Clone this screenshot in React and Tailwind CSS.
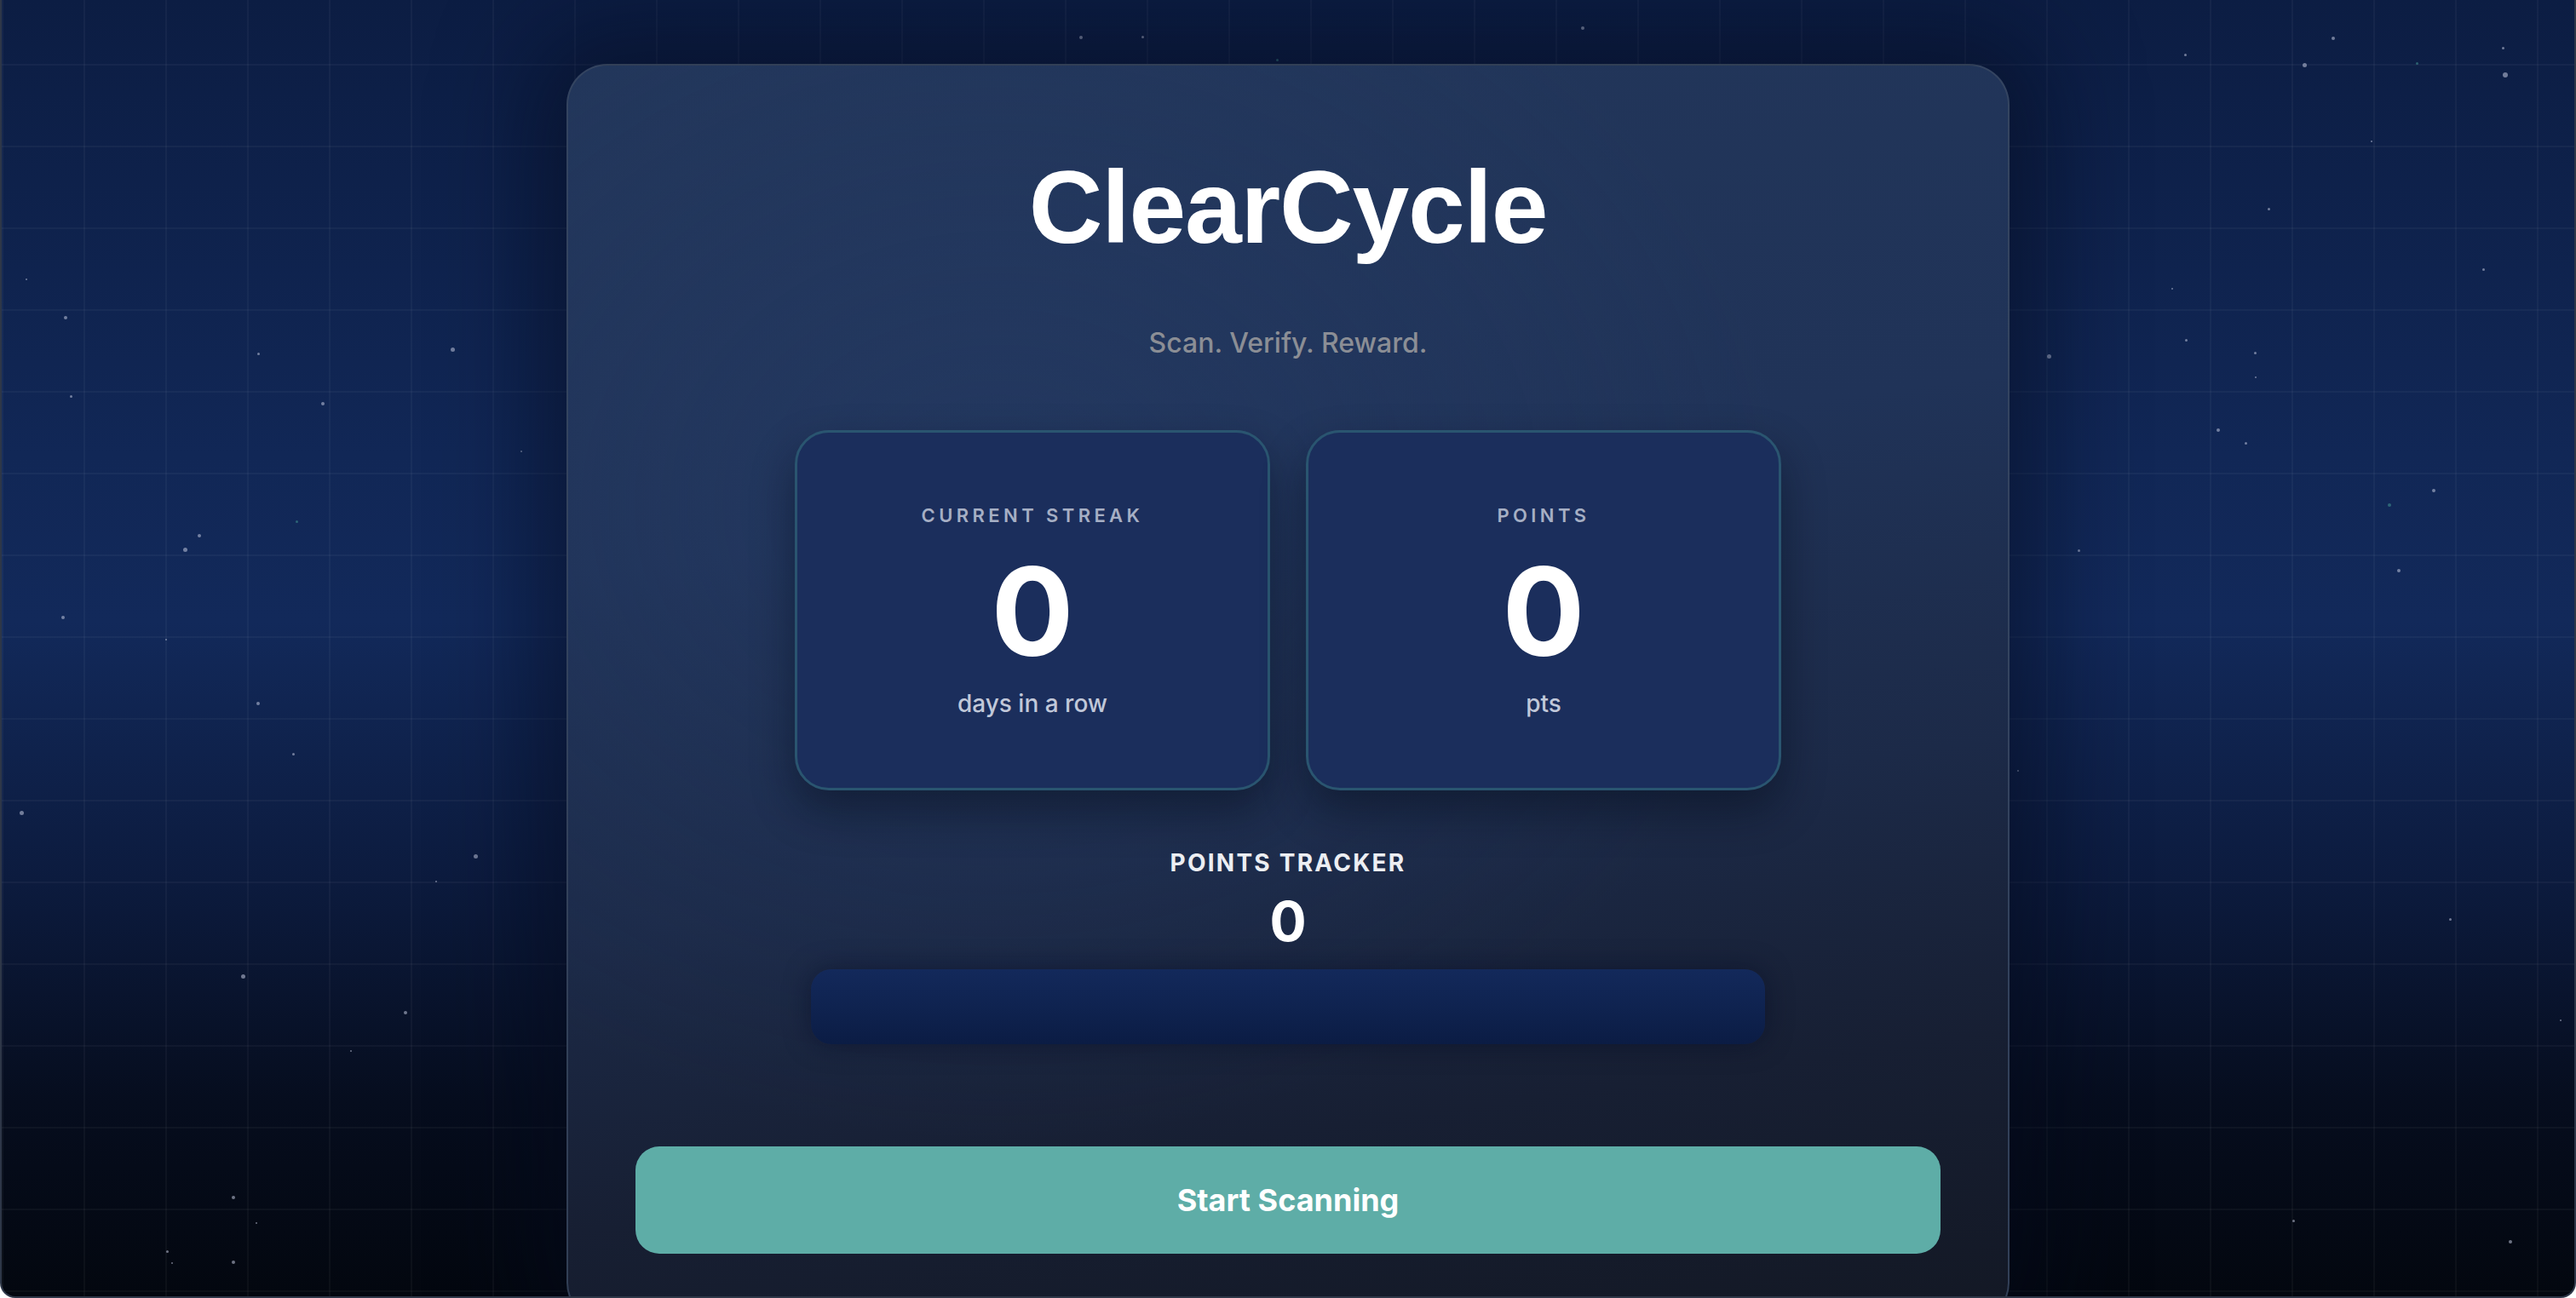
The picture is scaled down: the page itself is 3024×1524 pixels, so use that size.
import React from "react";

const stars = [
  [29, 328, 2], [75, 373, 4], [81, 465, 3], [301, 415, 3], [377, 474, 4],
  [529, 410, 5], [610, 530, 2], [346, 612, 3, true], [232, 629, 4], [215, 645, 5],
  [72, 725, 4], [193, 751, 2], [301, 826, 4], [342, 885, 3], [23, 954, 5],
  [556, 1005, 5], [510, 1035, 2], [283, 1146, 5], [474, 1189, 4], [410, 1234, 2],
  [272, 1406, 4], [299, 1436, 2], [194, 1469, 3], [200, 1483, 2], [272, 1482, 4],
  [1267, 44, 4], [1339, 43, 3], [1856, 33, 4], [1497, 70, 3, true],
  [2563, 64, 3], [2737, 45, 4], [2703, 76, 5], [2835, 74, 3, true], [2936, 56, 3],
  [2939, 88, 6], [2782, 166, 2], [2661, 245, 3], [2913, 316, 3], [2548, 339, 2],
  [2564, 399, 3], [2645, 414, 3], [2646, 443, 2], [2403, 418, 5], [2602, 505, 4],
  [2634, 520, 3], [2855, 576, 4], [2803, 593, 4, true], [2438, 646, 3], [2814, 670, 4],
  [2874, 1079, 3], [3004, 1198, 2], [2690, 1433, 3], [2945, 1458, 4], [2367, 905, 2],
];

function StatCard({ label, value, unit }) {
  return (
    <div className="flex h-[423px] flex-col items-center justify-center rounded-[40px] border-[3px] border-[#2a5570] bg-[#1b2e5c] shadow-[0_24px_50px_rgba(5,10,25,0.45)]">
      <div className="text-[22px] font-semibold uppercase leading-none tracking-[0.2em] text-[#a6afc4]">
        {label}
      </div>
      <div className="mt-[30px] text-[144px] font-bold leading-none text-white">
        {value}
      </div>
      <div className="mt-[22px] text-[28px] font-medium leading-none text-[#c1c8d9]">
        {unit}
      </div>
    </div>
  );
}

export default function App() {
  return (
    <div className="relative h-[1524px] w-full overflow-hidden rounded-b-[18px] border-x-2 border-b-2 border-[#2e3748] bg-[linear-gradient(180deg,#0c1d43_0%,#112756_35%,#12295a_48%,#0c1b3e_68%,#060d1e_85%,#03070f_100%)] font-['Inter',sans-serif]">
      <div className="absolute inset-0 bg-[linear-gradient(rgba(255,255,255,0.035)_2px,transparent_2px),linear-gradient(90deg,rgba(255,255,255,0.035)_2px,transparent_2px)] bg-[size:96px_96px] bg-[position:0px_75px]" />
      {stars.map(([x, y, s, teal], i) => (
        <span
          key={i}
          className={
            teal
              ? "absolute rounded-full bg-[#3f8e8c]/60"
              : "absolute rounded-full bg-[#c5cbe0]/55"
          }
          style={{ left: x - s / 2, top: y - s / 2, width: s, height: s }}
        />
      ))}

      <div className="relative z-10 mx-auto mt-[75px] w-[1694px] rounded-[48px] border-2 border-[#3a4862]/80 bg-[radial-gradient(ellipse_at_30%_35%,rgba(40,64,110,0.35),transparent_55%),linear-gradient(172deg,#22365a_0%,#203358_35%,#1c2a48_60%,#171f33_80%,#131824_100%)] px-[79px] pb-[80px] pt-[106px] shadow-[0_0_110px_40px_rgba(4,10,28,0.5)]">
        <h1 className="text-center font-['Liberation_Sans',Arial,sans-serif] text-[120px] font-bold leading-none tracking-[-0.01em] text-white">
          ClearCycle
        </h1>
        <p className="mt-[76px] text-center text-[32px] font-medium leading-[48px] text-[#8b8e95]">
          Scan. Verify. Reward.
        </p>

        <div className="mx-auto mt-[78px] grid w-[1158px] grid-cols-2 gap-[42px]">
          <StatCard label="Current Streak" value="0" unit="days in a row" />
          <StatCard label="Points" value="0" unit="pts" />
        </div>

        <div className="mt-[64px] text-center text-[28px] font-bold uppercase leading-[42px] tracking-[0.08em] text-[#eceef3]">
          Points Tracker
        </div>
        <div className="mt-[16px] text-center text-[64px] font-bold leading-none text-white">
          0
        </div>
        <div className="mx-auto mt-[24px] h-[88px] w-[1120px] rounded-[24px] bg-[linear-gradient(180deg,#13295b_0%,#0f2350_50%,#0b1c44_100%)] shadow-[0_0_30px_rgba(5,12,35,0.5)]" />

        <button className="mt-[120px] flex h-[126px] w-full items-center justify-center rounded-[28px] bg-[#5eada7] text-[36px] font-bold text-white">
          Start Scanning
        </button>
      </div>
    </div>
  );
}
